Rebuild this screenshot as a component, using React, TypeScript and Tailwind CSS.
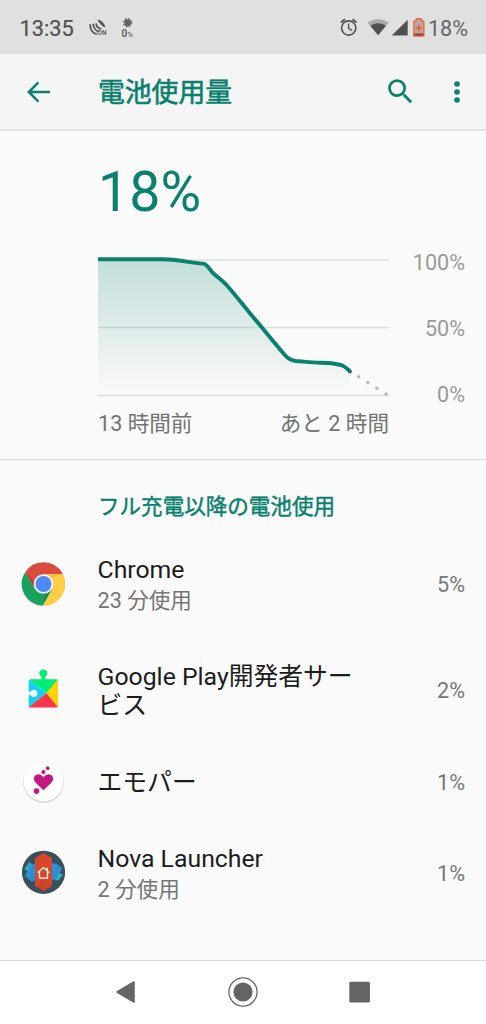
import type { ReactNode } from "react";
import { MdSearch } from "react-icons/md";

type AppUsage = {
  name: string;
  detail?: string;
  percent: string;
  icon: ReactNode;
  height: string;
};

function ChromeIcon() {
  return (
    <svg width="44" height="44" viewBox="-22.5 -22 44 44">
      <path d="M-18.3 -11.7A21.7 21.7 0 0 1 19.3 -10L0 -10L-8.66 5Z" fill="#db4c3f" />
      <path d="M19.3 -10A21.7 21.7 0 0 1 -1 21.7L8.66 5L0 -10Z" fill="#ffcd46" />
      <path d="M-1 21.7A21.7 21.7 0 0 1 -18.3 -11.7L-8.66 5L8.66 5Z" fill="#1aa15f" />
      <path d="M0 -10H19.3L9 -6.5Z" fill="#e8b53a" opacity="0.5" />
      <path d="M-18.3 -11.7L-9.6 3L-9.5 -3Z" fill="#a8362d" opacity="0.5" />
      <path d="M-1 21.7L8.66 5L2 9.5Z" fill="#117a45" opacity="0.5" />
      <circle r="9.8" fill="#f4f6f8" />
      <circle r="8" fill="#4c8bf5" />
    </svg>
  );
}

function PlayServicesIcon() {
  return (
    <svg width="44" height="44" viewBox="21 667.5 44 44">
      <path d="M30.5 678.7H41.6V676.4A4 4 0 1 1 45.1 676.4V678.7H56.5Q58 678.7 58 680.2L46.5 692.5L29.2 679.2Z" fill="#00ee76" />
      <path d="M29.2 679.2L46.5 692.5L29.2 706.5Q28.7 706.2 28.7 705.5V694.6H30.5A3.7 3.7 0 1 0 30.5 691.2H28.7V680.2Q28.7 679.6 29.2 679.2Z" fill="#15d0f5" />
      <path d="M57.6 679.2Q58 679.6 58 680.2V705.5Q58 706.2 57.5 706.5L46.5 692.5Z" fill="#ffd400" />
      <path d="M46.5 692.5L57.6 706.4Q57.1 707 56.5 707H30.2Q29.5 707 29 706.5Z" fill="#f73648" />
    </svg>
  );
}

function EmopaIcon() {
  return (
    <svg width="44" height="44" viewBox="-22.5 -22.5 44 44">
      <circle cy="0.9" r="20.3" fill="#cfcfcf" />
      <circle r="20.2" fill="#e8e8e8" />
      <circle cy="-0.2" r="19.8" fill="#ffffff" />
      <path d="M0 8.7L-7.6 1.5C-12 -3 -8.5 -7.4 -4.8 -7.2C-2.3 -7 -0.8 -5.5 0 -3.7C0.8 -5.5 2.3 -7 4.8 -7.2C8.5 -7.4 12 -3 7.6 1.5Z" fill="#c2187f" />
      <circle cx="4.2" cy="-13.3" r="1.9" fill="#c2187f" />
      <circle cx="-0.1" cy="-9.4" r="2.1" fill="#c2187f" />
      <circle cx="-7" cy="9.6" r="2.8" fill="#c2187f" />
    </svg>
  );
}

function NovaIcon() {
  return (
    <svg width="44" height="44" viewBox="-22.5 -22.3 44 44">
      <circle r="21.6" fill="#37505c" />
      <path d="M-14.5 -10L-8 -6V3L-19.3 -3Z" fill="#31a9bd" />
      <path d="M-18.5 3.5L-13 -7L-8 -9V8L-12 9.5Z" fill="#2b8fd6" />
      <path d="M14.5 8.5L8 6V-3L19.3 2.5Z" fill="#31b5bd" />
      <path d="M8 -9L13 -8.5L18.8 -4L13.5 6L8 8Z" fill="#2b8fd6" />
      <path d="M-8.5 -14.3L0 -19.3L8.5 -14.3V13.8L0 18.8L-8.5 13.8Z" fill="#d9472b" />
      <path d="M-3 6L8.5 12V13.8L0 18.8L-5 15.8Z" fill="#bd3b22" opacity="0.45" />
      <path d="M-5.8 0.4L0 -4.8L5.8 0.4M3.7 -1.5V-4.6M-4 0V5.8H4V0" fill="none" stroke="#fff" strokeWidth="1.3" />
    </svg>
  );
}

const apps: AppUsage[] = [
  { name: "Chrome", detail: "23 分使用", percent: "5%", icon: <ChromeIcon />, height: "h-[105px]" },
  { name: "Google Play開発者サービス", percent: "2%", icon: <PlayServicesIcon />, height: "h-[107px]" },
  { name: "エモパー", percent: "1%", icon: <EmopaIcon />, height: "h-[76px]" },
  { name: "Nova Launcher", detail: "2 分使用", percent: "1%", icon: <NovaIcon />, height: "h-[106px]" },
];

function StatusBar() {
  return (
    <div className="flex h-[54px] shrink-0 items-center justify-between bg-[#e0e0e0] pl-[19.5px] pr-[18px] pt-[2px] text-[#505050]">
      <div className="flex items-center">
        <span className="w-[69.5px] pt-px text-[21.8px] leading-none [-webkit-text-stroke:0.2px_currentColor]">13:35</span>
        {/* Location and brightness indicators */}
        <svg width="20" height="20" viewBox="89 18 20 20" fill="none" stroke="#505050">
          <path d="M98 20C101.5 20.6 104.2 23.4 105 27.2C102.6 26.4 99.4 23.4 98 20Z" fill="#505050" strokeWidth="0.6" />
          <path d="M96 23.3C96.3 26.2 98.4 28.3 101.3 28.8" strokeWidth="1.7" />
          <path d="M93.2 23.8C93.3 27.9 96 31 99.3 31.5" strokeWidth="1.7" />
          <path d="M90.2 24.3C89.8 29.4 92.8 33.6 97 34" strokeWidth="1.7" />
          <text x="97.6" y="35.2" fontSize="6.4" fontWeight="500" fill="#505050" stroke="none">ON</text>
        </svg>
        <svg className="ml-[12px]" width="14" height="20" viewBox="121 18 14 20">
          <circle cx="127.6" cy="22.8" r="3.2" fill="#505050" />
          <circle cx="127.6" cy="22.8" r="4" fill="none" stroke="#505050" strokeWidth="1.2" strokeDasharray="1.7 1.44" />
          <circle cx="127.6" cy="22.8" r="1.6" fill="none" stroke="#a0a0a0" strokeWidth="0.5" />
          <text x="121.4" y="37" fontSize="10" fontWeight="500" fill="#505050">0</text>
          <text x="127.2" y="37" fontSize="7.8" fill="#505050">%</text>
        </svg>
      </div>
      <div className="flex items-center">
        <svg width="88" height="22" viewBox="340 17 88 22">
          <g fill="none" stroke="#505050">
            <circle cx="348.7" cy="28" r="7.1" strokeWidth="1.6" />
            <path d="M348.6 23.5V28.4L352 30.4" strokeWidth="1.4" />
            <path d="M340.9 22.5L344.9 19.2M352.5 19.2L356.5 22.5" strokeWidth="1.8" />
          </g>
          <path d="M367.6 22.8C373.4 18.1 382.8 18.1 388.6 22.8L378.1 35.3Z" fill="#aaaaaa" />
          <path d="M370.3 25.8C374.7 22.4 381.5 22.4 385.9 25.8L378.1 35.3Z" fill="#505050" />
          <path d="M391.7 35.6L407.7 19.7V35.6Z" fill="#505050" />
          <path d="M413.8 20.9H416.2V18.8H421.3V20.9H423.8V35.9H413.8Z" fill="#b4aaa6" stroke="#ee6b45" strokeWidth="1.5" strokeLinejoin="round" />
          <path d="M414.3 33.3H423.3V35.9H414.3Z" fill="#a14a34" />
          <path d="M418.8 24.8V31.4M415.5 28.1H422.1" stroke="#ee5b30" strokeWidth="1.7" />
        </svg>
        <span className="pt-px text-[21.6px] leading-none text-[#666]">18%</span>
      </div>
    </div>
  );
}

function AppBar() {
  return (
    <header className="flex h-[77px] shrink-0 items-center border-b-2 border-[#e4e4e4] bg-[#f5f5f5] pl-[26px] pr-[16px] text-[#0a806f]">
      <svg width="26" height="26" viewBox="0 0 26 26" fill="none" stroke="currentColor" strokeWidth="2.5">
        <path d="M24 13H3M12.4 3.3L2.8 13L12.4 22.7" />
      </svg>
      <h1 className="ml-[46px] flex-1 pt-[4px] text-[26.8px] leading-none [-webkit-text-stroke:0.6px_currentColor]">電池使用量</h1>
      <MdSearch size={33} />
      <svg className="ml-[27px]" width="26" height="26" viewBox="-13 -13 26 26" fill="currentColor">
        <circle cy="-8" r="2.8" />
        <circle r="2.8" />
        <circle cy="8" r="2.8" />
      </svg>
    </header>
  );
}

function BatteryChart() {
  return (
    <svg width="292" height="142" viewBox="98 256 292 142" className="block">
      <defs>
        <linearGradient id="level" x1="0" y1="259" x2="0" y2="395" gradientUnits="userSpaceOnUse">
          <stop offset="0" stopColor="#0a806f" stopOpacity="0.23" />
          <stop offset="1" stopColor="#0a806f" stopOpacity="0" />
        </linearGradient>
      </defs>
      <path d="M97.5 260H389M97.5 327.5H389M97.5 395.5H389" stroke="#dcdedd" strokeWidth="1.4" />
      <path d="M97.5 259.3H163C176 259.4 188 262.2 203 263.6C208 264.2 209 269.5 213 273C218 277.5 223 281 227 285.5C238 298 250 314 262 327.5C269 336 278 347 285 355.2C288 358.6 291 360.5 296 361C304 361.6 312 362.7 321 362.8C329 362.8 335 363.5 341 365C345 366.2 347 368.5 350 371.5V395H97.5Z" fill="url(#level)" />
      <path d="M97.5 259.3H163C176 259.4 188 262.2 203 263.6C208 264.2 209 269.5 213 273C218 277.5 223 281 227 285.5C238 298 250 314 262 327.5C269 336 278 347 285 355.2C288 358.6 291 360.5 296 361C304 361.6 312 362.7 321 362.8C329 362.8 335 363.5 341 365C345 366.2 347 368.5 350 371.5" fill="none" stroke="#0a806f" strokeWidth="3.9" />
      <circle cx="350" cy="371.5" r="1.9" fill="#0a806f" />
      <path d="M358.7 376.7L386 394.1" stroke="#b0bec5" strokeWidth="3.4" strokeLinecap="round" strokeDasharray="0.01 10.75" />
    </svg>
  );
}

export default function App() {
  return (
    <div className="flex h-[1024px] w-[486px] flex-col bg-[#fafafa] font-[Roboto,'Noto_Sans_CJK_JP',sans-serif]" lang="ja">
      <StatusBar />
      <AppBar />

      {/* Battery level */}
      <section className="flex h-[329px] shrink-0 flex-col border-b-[1.5px] border-[#d9d9d9] pl-[98px] pr-[21px] pt-[34px]">
        <div className="text-[55.5px] leading-[56px] text-[#0a806f]">18%</div>
        <div className="mt-[35px] flex justify-between">
          <div className="w-[291px]">
            <BatteryChart />
            <div className="mt-[10px] flex justify-between whitespace-nowrap text-[21.6px] leading-[32px] text-[#737373]">
              <span>13 時間前</span>
              <span>あと 2 時間</span>
            </div>
          </div>
          <div className="-mt-[5px] flex h-[156px] flex-col justify-between text-right text-[21.6px] leading-[24px] text-[#999]">
            <span>100%</span>
            <span>50%</span>
            <span>0%</span>
          </div>
        </div>
      </section>

      {/* Usage per app */}
      <section className="flex-1">
        <h2 className="h-[72px] pl-[98px] pt-[31px] text-[21.55px] leading-[32px] text-[#0a806f] [-webkit-text-stroke:0.45px_currentColor]">
          フル充電以降の電池使用
        </h2>
        {apps.map((app) => (
          <div key={app.name} className={`flex items-center pl-[21px] pr-[21px] ${app.height}`}>
            <div className="-mt-[2px] w-[76.5px] shrink-0">{app.icon}</div>
            <div className="w-[268px] pt-[1px]">
              <div className="break-all text-[24.8px] leading-[29px] text-[#1c1c1c]">{app.name}</div>
              {app.detail && <div className="mt-[2px] text-[21.6px] leading-[29px] text-[#757575]">{app.detail}</div>}
            </div>
            <div className="flex-1 pt-px text-right text-[21.6px] leading-none text-[#777]">{app.percent}</div>
          </div>
        ))}
      </section>

      {/* Navigation keys */}
      <nav className="flex h-[64px] shrink-0 items-center justify-between border-t-[1.5px] border-[#d8d8d8] bg-white pb-[2px] pl-[114px] pr-[115px] text-[#646464]">
        <svg width="22" height="24" viewBox="0 0 22 24" fill="currentColor" stroke="currentColor" strokeWidth="1.5" strokeLinejoin="round">
          <path d="M3 12L20 2V22Z" />
        </svg>
        <svg width="30" height="30" viewBox="-15 -15 30 30">
          <circle r="14.1" fill="none" stroke="currentColor" strokeWidth="1.2" />
          <circle r="9.6" fill="currentColor" />
        </svg>
        <svg width="22" height="22" viewBox="0 0 22 22">
          <rect x="0.3" y="0.8" width="20.6" height="20.6" rx="1.5" fill="currentColor" />
        </svg>
      </nav>
    </div>
  );
}
